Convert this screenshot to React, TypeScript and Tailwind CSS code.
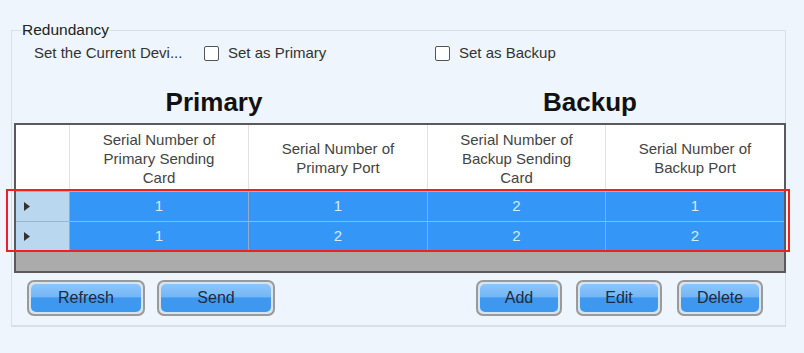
const rows = [
  ['1', '1', '2', '1'],
  ['1', '2', '2', '2'],
]

const headers = [
  'Serial Number of Primary Sending Card',
  'Serial Number of Primary Port',
  'Serial Number of Backup Sending Card',
  'Serial Number of Backup Port',
]

const Check = ({ label }: { label: string }) => (
  <label className="flex items-center gap-[9px]">
    <span className="w-[15px] h-[15px] border border-[#555] rounded-[2px] bg-white" />
    <span className="text-[15px] text-[#333]">{label}</span>
  </label>
)

const Btn = ({ label, w }: { label: string; w: string }) => (
  <button
    className={`${w} h-[36px] rounded-[7px] border-2 border-[#9a9a9a] p-[2px] bg-[#d7e3ee]`}
  >
    <span className="flex h-full w-full items-center justify-center rounded-[5px] bg-[linear-gradient(#8cc6fb_0%,#74b6f6_45%,#3f98f0_50%,#3d98f0_100%)] text-[16px] text-[#1c2b44]">
      {label}
    </span>
  </button>
)

export default function App() {
  return (
    <div
      className="w-[804px] h-[353px] bg-[#eef5fd] pt-[30px] pl-[11px]"
      style={{ fontFamily: '"Liberation Sans", Arial, sans-serif' }}
    >
      <div className="relative w-[775px] h-[297px] border border-[#d9dfe6] border-b-2">
        <span className="absolute -top-[10px] left-[9px] px-[1px] bg-[#eef5fd] text-[15.5px] leading-[17px] text-[#222]">
          Redundancy
        </span>

        <div className="flex items-center h-[16px] mt-[14px] pl-[22px] text-[15px] text-[#333]">
          <span className="w-[170px]">Set the Current Devi...</span>
          <div className="w-[231px]">
            <Check label="Set as Primary" />
          </div>
          <Check label="Set as Backup" />
        </div>

        <div className="flex mt-[27px] h-[28px] items-center text-[26px] font-bold text-[#111]">
          <div className="w-[404px] text-center">Primary</div>
          <div className="w-[348px] text-center">Backup</div>
        </div>

        <div className="relative ml-[2px] mt-[7px] w-[772px] border-2 border-[#5a5a5a] bg-[#ababab]">
          <div className="grid grid-cols-[53px_179px_179px_178px_179px] bg-white h-[66px] text-[15px] leading-[19px] text-[#444]">
            <div />
            {headers.map((h) => (
              <div key={h} className="flex items-center justify-center border-l border-[#e2e2e2] px-[20px] text-center">
                {h}
              </div>
            ))}
          </div>
          {rows.map((r, i) => (
            <div key={i} className="grid grid-cols-[53px_179px_179px_178px_179px] h-[30px] border-t border-[#9cb6cc] text-[15px] text-[#d6ebff]">
              <div className="flex items-center bg-[#b9d7ef] pl-[8px]">
                <svg width="6" height="9" viewBox="0 0 6 9"><path d="M0 0L6 4.5L0 9Z" fill="#333" /></svg>
              </div>
              {r.map((v, j) => (
                <div key={j} className="flex items-center justify-center bg-[#3497f7] border-l border-[#8aaed0]">
                  {v}
                </div>
              ))}
            </div>
          ))}
          <div className="h-[20px]" />
          <div className="absolute left-[-10px] top-[64px] w-[784px] h-[63px] border-2 border-[#ee2020] pointer-events-none" />
        </div>

        <div className="flex mt-[7px] pl-[15px]">
          <Btn label="Refresh" w="w-[118px]" />
          <div className="ml-[12px]">
            <Btn label="Send" w="w-[118px]" />
          </div>
          <div className="ml-[201px]">
            <Btn label="Add" w="w-[86px]" />
          </div>
          <div className="ml-[14px]">
            <Btn label="Edit" w="w-[86px]" />
          </div>
          <div className="ml-[15px]">
            <Btn label="Delete" w="w-[86px]" />
          </div>
        </div>
      </div>
    </div>
  )
}
